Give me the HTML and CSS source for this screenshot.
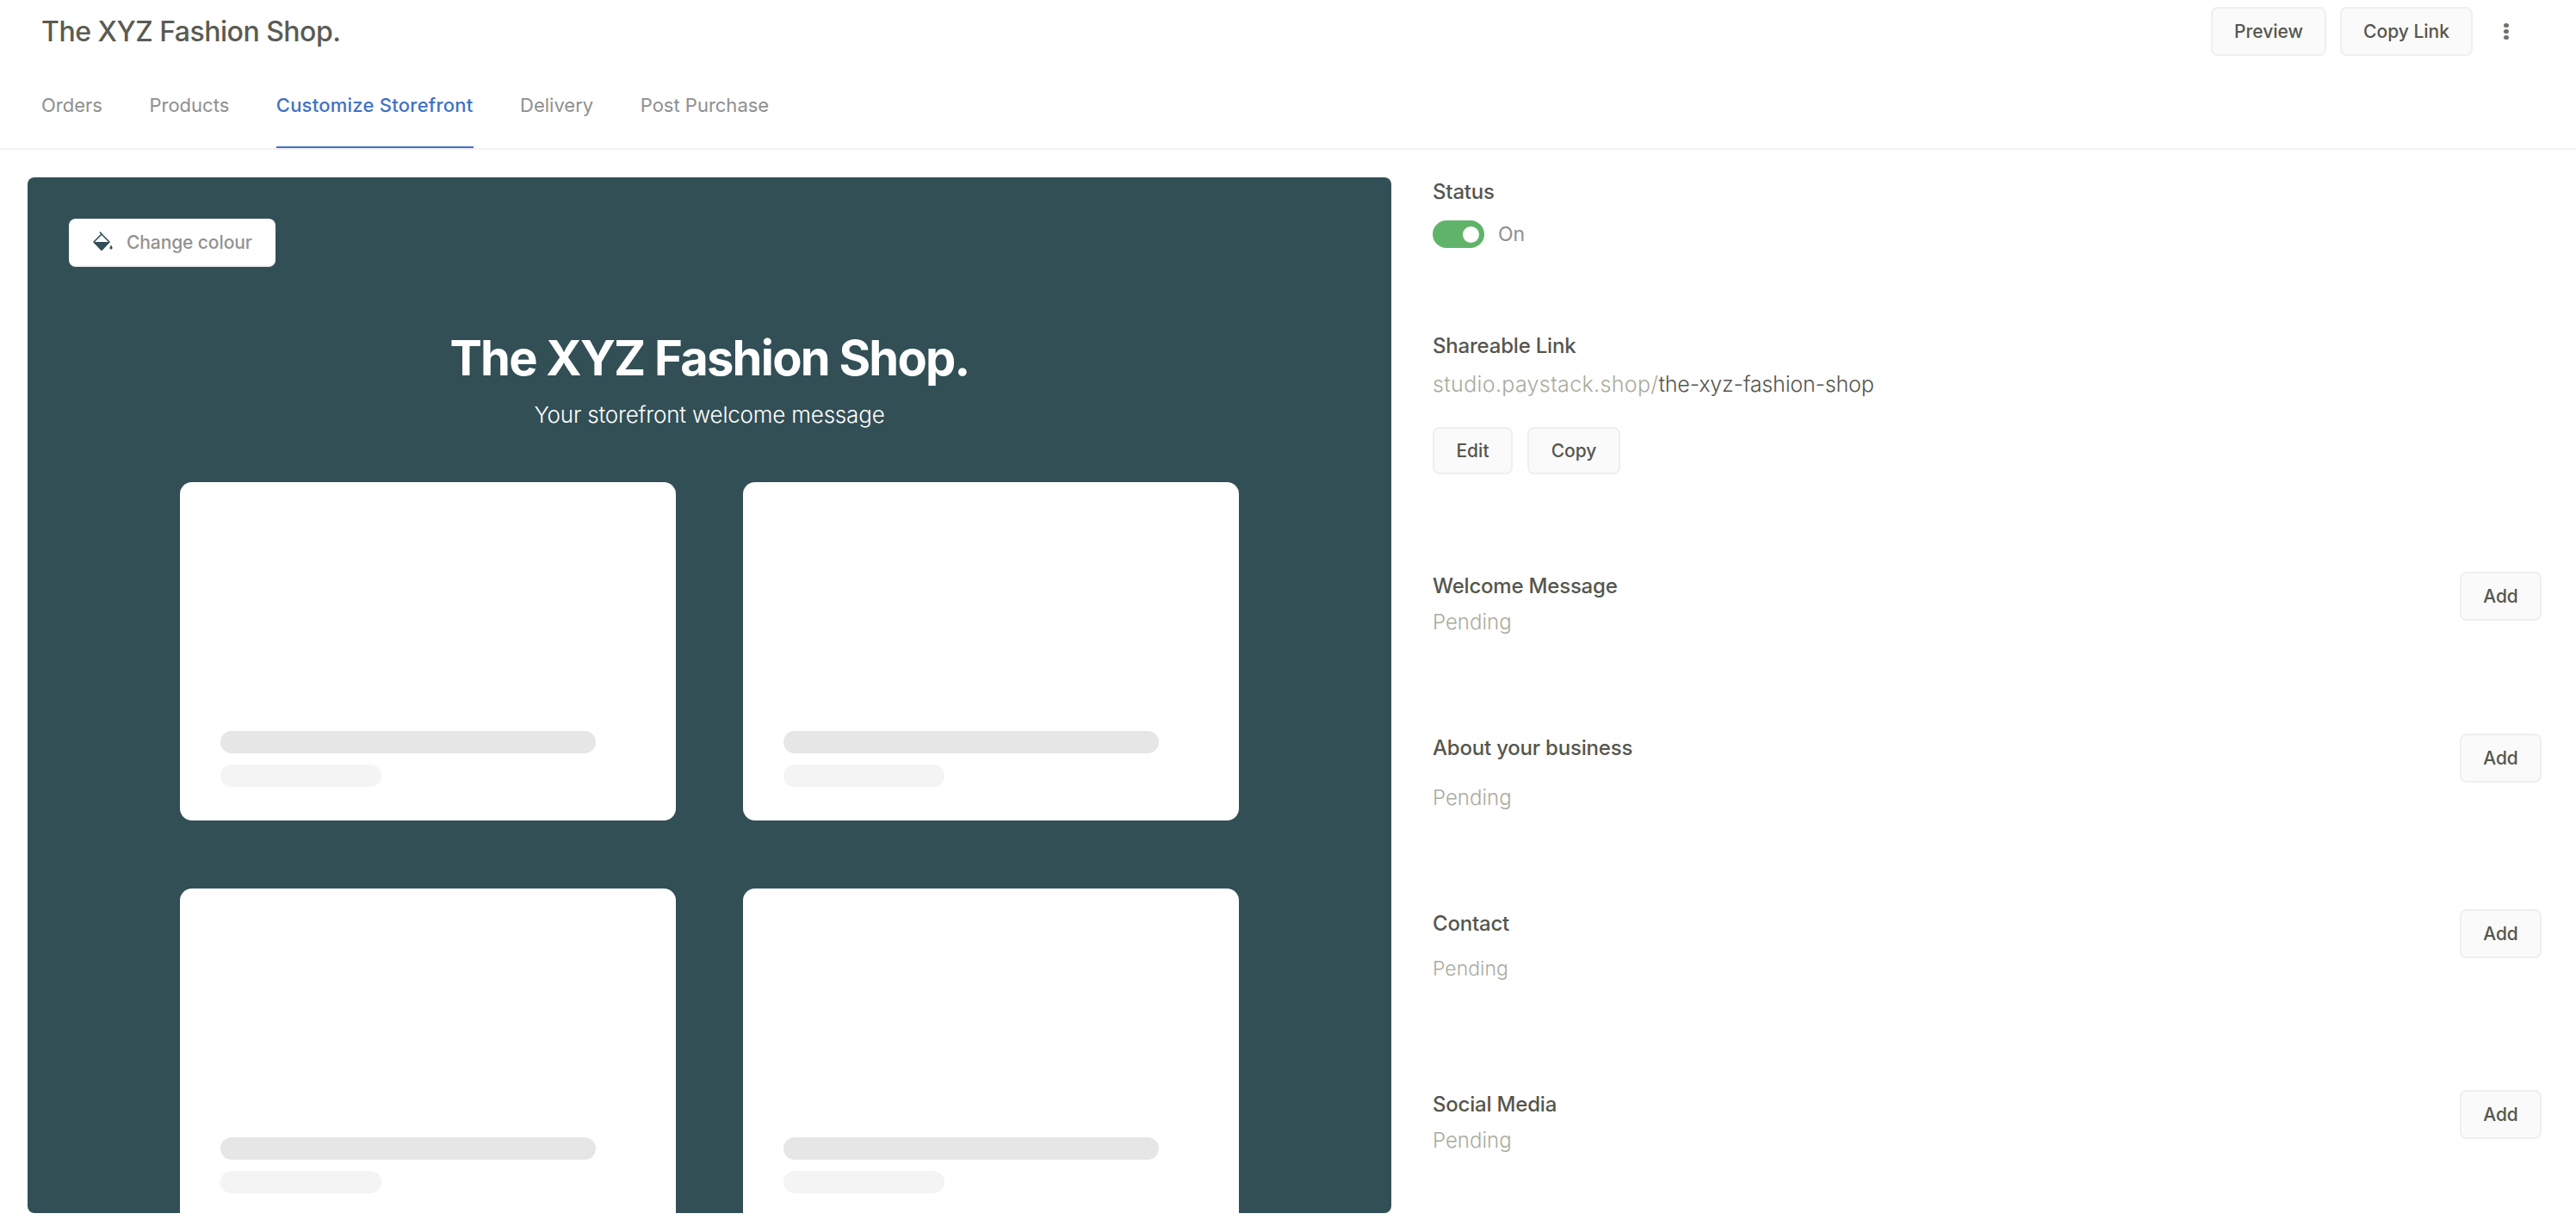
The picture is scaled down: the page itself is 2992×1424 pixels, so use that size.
FILE: index.html
```html
<!DOCTYPE html>
<html lang="en">
<head>
  <meta charset="UTF-8">
  <meta name="viewport" content="width=device-width, initial-scale=1.0">
  <title>The XYZ Fashion Shop.</title>
  <link rel="stylesheet" href="styles.css">
</head>
<body>
  <div class="topbar">
    <div class="title-row">
      <h1 class="shop-title">The XYZ Fashion Shop.</h1>
      <div class="title-actions">
        <button class="btn btn-preview">Preview</button>
        <button class="btn btn-copylink">Copy Link</button>
        <span class="more-dots"><i></i><i></i><i></i></span>
      </div>
    </div>
    <div class="tabs">
      <a class="tab">Orders</a>
      <a class="tab">Products</a>
      <a class="tab active">Customize Storefront</a>
      <a class="tab">Delivery</a>
      <a class="tab">Post Purchase</a>
    </div>
  </div>

  <div class="main-content">
    <div class="storefront">
      <button class="colour-btn">
        <svg width="24" height="24" viewBox="0 0 24 24">
          <path d="M10 3 L1 12 L10 21.5 L19 12 Z" fill="none" stroke="#324f56" stroke-width="1.6" stroke-linejoin="round"/>
          <path d="M1 12 H19 L10 21.5 Z" fill="#324f56"/>
          <path d="M8 0.5 L10.5 3.5" fill="none" stroke="#324f56" stroke-width="1.6"/>
          <path d="M21 15.5 C22 17.5 22.6 18.2 22.6 19 A1.6 1.6 0 0 1 19.4 19 C19.4 18.2 20 17.5 21 15.5 Z" fill="#324f56"/>
        </svg>
        <span>Change colour</span>
      </button>
      <h2 class="store-name">The XYZ Fashion Shop.</h2>
      <p class="store-message">Your storefront welcome message</p>
      <div class="card-grid">
        <div class="card"><div class="bar bar-long"></div><div class="bar bar-short"></div></div>
        <div class="card"><div class="bar bar-long"></div><div class="bar bar-short"></div></div>
        <div class="card"><div class="bar bar-long"></div><div class="bar bar-short"></div></div>
        <div class="card"><div class="bar bar-long"></div><div class="bar bar-short"></div></div>
      </div>
    </div>

    <div class="settings">
      <div class="label">Status</div>
      <div class="status-line">
        <span class="toggle"><span class="knob"></span></span>
        <span class="status-text">On</span>
      </div>

      <div class="label link-label">Shareable Link</div>
      <div class="share-url"><span class="url-base">studio.paystack.shop/</span>the-xyz-fashion-shop</div>
      <div class="link-actions">
        <button class="btn btn-edit">Edit</button>
        <button class="btn btn-copy">Copy</button>
      </div>

      <div class="row row-welcome">
        <div>
          <div class="label">Welcome Message</div>
          <div class="pending">Pending</div>
        </div>
        <button class="btn btn-add">Add</button>
      </div>
      <div class="row row-about">
        <div>
          <div class="label">About your business</div>
          <div class="pending pending-far">Pending</div>
        </div>
        <button class="btn btn-add">Add</button>
      </div>
      <div class="row row-contact">
        <div>
          <div class="label">Contact</div>
          <div class="pending pending-small">Pending</div>
        </div>
        <button class="btn btn-add">Add</button>
      </div>
      <div class="row row-social">
        <div>
          <div class="label">Social Media</div>
          <div class="pending">Pending</div>
        </div>
        <button class="btn btn-add">Add</button>
      </div>
    </div>
  </div>
</body>
</html>
```

FILE: styles.css
```css
* {
  box-sizing: border-box;
}

body {
  margin: 0;
  font-family: Inter, "Liberation Sans", sans-serif;
  background: #fff;
  color: #55564e;
}

.topbar {
  height: 174px;
  border-bottom: 2px solid #f2f2f2;
  display: flex;
  flex-direction: column;
  justify-content: space-between;
}

.title-row {
  display: flex;
  justify-content: space-between;
  align-items: center;
  padding: 8px 0 0 48px;
}

.shop-title {
  margin: 0;
  font-size: 32px;
  font-weight: 500;
  letter-spacing: -0.5px;
  color: #5a5b52;
}

.title-actions {
  display: flex;
  align-items: center;
}

.btn {
  height: 57px;
  padding: 0;
  background: #fafafa;
  border: 2px solid #efefef;
  border-radius: 8px;
  font-family: inherit;
  font-size: 21px;
  font-weight: 500;
  color: #55564e;
}

.btn-preview {
  width: 134px;
  margin-right: 16px;
}

.btn-copylink {
  width: 154px;
}

.more-dots {
  display: flex;
  flex-direction: column;
  gap: 2px;
  margin: 0 78px 0 36px;
}

.more-dots i {
  display: block;
  width: 6px;
  height: 5px;
  border-radius: 50%;
  background: #6f7068;
}

.tabs {
  display: flex;
  gap: 54.5px;
  padding-left: 48px;
}

.tab {
  font-size: 22px;
  line-height: 40px;
  padding-bottom: 28px;
  border-bottom: 2px solid transparent;
  color: #8f8f8f;
}

.tab.active {
  color: #3f72c4;
  font-weight: 500;
  letter-spacing: 0.25px;
  border-bottom-color: #3f72c4;
}

.main-content {
  display: flex;
  padding: 32px 40px 0 32px;
}

.storefront {
  flex: none;
  width: 1584px;
  height: 1203px;
  padding-top: 48px;
  overflow: hidden;
  border-radius: 8px;
  background: #324f56;
  text-align: center;
}

.colour-btn {
  display: flex;
  align-items: center;
  gap: 15px;
  width: 240px;
  height: 56px;
  margin-left: 48px;
  padding: 0 0 0 28px;
  border: 0;
  border-bottom: 2px solid #f0f0f0;
  border-radius: 8px;
  background: #fff;
  font-family: inherit;
  font-size: 21px;
  font-weight: 500;
  letter-spacing: -0.1px;
  color: #929292;
}

.store-name {
  margin: 74px 0 0;
  font-size: 56px;
  line-height: 64px;
  font-weight: 700;
  letter-spacing: -1.75px;
  color: #fff;
}

.store-message {
  margin: 16px 0 0;
  font-size: 26px;
  line-height: 36px;
  font-weight: 300;
  letter-spacing: -0.2px;
  color: #fff;
}

.card-grid {
  display: grid;
  grid-template-columns: 576px 576px;
  justify-content: center;
  column-gap: 78px;
  row-gap: 79px;
  margin-top: 60px;
}

.card {
  height: 393px;
  padding: 0 47px 39px;
  display: flex;
  flex-direction: column;
  justify-content: flex-end;
  gap: 13px;
  border-radius: 14px;
  background: #fff;
}

.bar {
  height: 26px;
  border-radius: 13px;
}

.bar-long {
  width: 436px;
  background: #e6e6e6;
}

.bar-short {
  width: 187px;
  background: #f4f4f4;
}

.settings {
  flex: 1;
  padding-left: 48px;
  margin-top: 1px;
}

.label {
  font-size: 24px;
  line-height: 32px;
  font-weight: 500;
  letter-spacing: -0.2px;
  color: #55564e;
}

.status-line {
  display: flex;
  align-items: center;
  gap: 16px;
  margin-top: 17px;
}

.toggle {
  display: flex;
  align-items: center;
  justify-content: flex-end;
  width: 60px;
  height: 32px;
  padding-right: 6px;
  border-radius: 16px;
  background: #5fb469;
}

.knob {
  width: 19px;
  height: 19px;
  border-radius: 50%;
  background: #fff;
}

.status-text {
  font-size: 23px;
  color: #8f8f8f;
}

.link-label {
  margin-top: 98px;
}

.share-url {
  margin-top: 10px;
  font-size: 25px;
  line-height: 36px;
  font-weight: 300;
  letter-spacing: -0.15px;
  color: #55564e;
}

.url-base {
  letter-spacing: 0.35px;
  color: #a9aba0;
}

.link-actions {
  display: flex;
  gap: 17px;
  margin-top: 32px;
}

.btn-edit {
  width: 93px;
  height: 55px;
}

.btn-copy {
  width: 108px;
  height: 55px;
}

.row {
  display: flex;
  justify-content: space-between;
  align-items: flex-start;
}

.row-welcome,
.row-about,
.row-contact {
  margin-top: 114px;
}

.row-social {
  margin-top: 126px;
}

.btn-add {
  width: 95px;
  margin-top: -1px;
}

.pending {
  margin-top: 10px;
  font-size: 24px;
  line-height: 32px;
  font-weight: 300;
  color: #a9aba0;
}

.pending-far {
  margin-top: 26px;
}

.pending-small {
  margin-top: 20px;
  font-size: 23px;
}
```
